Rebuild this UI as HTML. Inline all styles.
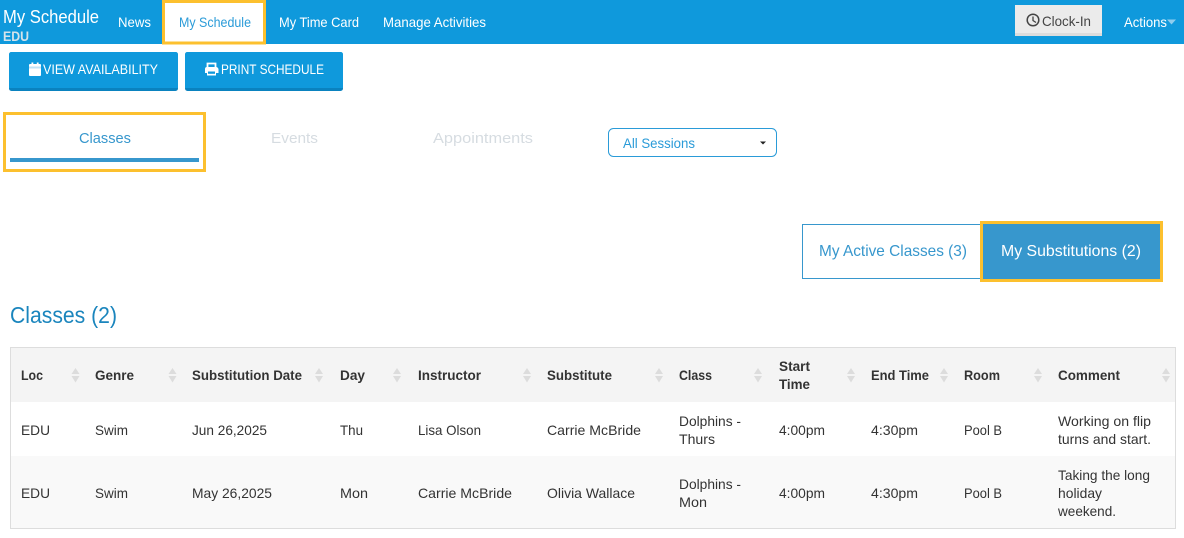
<!DOCTYPE html>
<html lang="en"><head><meta charset="utf-8"><title>My Schedule</title>
<style>
html,body{margin:0;padding:0;background:#fff;width:1184px;height:538px;overflow:hidden}
svg{display:block}
text{font-family:"Liberation Sans",sans-serif;font-size:14px;fill:#333;white-space:pre}
.n{fill:#fff}
.h{font-weight:bold;font-size:14px}
</style></head><body>
<svg width="1184" height="538" viewBox="0 0 1184 538" xmlns="http://www.w3.org/2000/svg">
<rect x="0" y="0" width="1184" height="44" fill="#0f99dc"/>
<text class="n" x="3" y="23" style="font-size:18px" textLength="96" lengthAdjust="spacingAndGlyphs">My Schedule</text>
<text x="3" y="41" style="font-size:14px;font-weight:bold;fill:#d5e3ea" textLength="26" lengthAdjust="spacingAndGlyphs">EDU</text>
<text class="n" x="118" y="27" textLength="33" lengthAdjust="spacingAndGlyphs">News</text>
<rect x="163.500" y="1.500" width="101" height="41.500" fill="#fff" stroke="#fcc02e" stroke-width="3"/>
<text x="179" y="27" style="fill:#2a9bd8" textLength="72" lengthAdjust="spacingAndGlyphs">My Schedule</text>
<text class="n" x="279" y="27" textLength="80" lengthAdjust="spacingAndGlyphs">My Time Card</text>
<text class="n" x="383" y="27" textLength="103" lengthAdjust="spacingAndGlyphs">Manage Activities</text>

<rect x="1015" y="5" width="87" height="31" fill="#ebebeb"/>
<rect x="1015" y="33" width="87" height="3" fill="#dcdcdc"/>
<circle cx="1033" cy="20" r="5.800" fill="none" stroke="#444" stroke-width="1.500"/>
<path d="M1033 16.500V20.500L1036 22.500" fill="none" stroke="#444" stroke-width="1.300"/>
<text x="1042" y="26" style="fill:#444" textLength="49" lengthAdjust="spacingAndGlyphs">Clock-In</text>
<text class="n" x="1124" y="27" textLength="43" lengthAdjust="spacingAndGlyphs">Actions</text>
<path d="M1167 19.500H1176L1171.500 24.500Z" fill="#8fcdee"/>

<rect x="9" y="52" width="169" height="39" rx="2.500" fill="#0a82bf"/>
<path d="M9 54.500a2.500 2.500 0 0 1 2.500-2.500h164a2.500 2.500 0 0 1 2.500 2.500V88H9Z" fill="#0f99dc"/>
<rect x="29" y="64" width="12" height="12" rx="1" fill="#fff"/>
<rect x="29" y="66.500" width="12" height="2" fill="#bfe3f7"/>
<rect x="31.500" y="62.500" width="1.800" height="3" fill="#fff"/><rect x="36.800" y="62.500" width="1.800" height="3" fill="#fff"/>
<text class="n" x="43" y="74" textLength="115" lengthAdjust="spacingAndGlyphs">VIEW AVAILABILITY</text>

<rect x="185" y="52" width="158" height="39" rx="2.500" fill="#0a82bf"/>
<path d="M185 54.500a2.500 2.500 0 0 1 2.500-2.500h153a2.500 2.500 0 0 1 2.500 2.500V88H185Z" fill="#0f99dc"/>
<path d="M207.500 67.500V63.500H215.500V67.500" fill="none" stroke="#fff" stroke-width="1.800"/>
<path d="M207 67H216a2.500 2.500 0 0 1 2.500 2.500V73H216V75.500H207V73H205V69a2 2 0 0 1 2-2Z" fill="#fff"/>
<rect x="208" y="71.500" width="7" height="2.300" fill="#0f99dc"/>
<text class="n" x="221" y="74" textLength="103" lengthAdjust="spacingAndGlyphs">PRINT SCHEDULE</text>

<rect x="4.500" y="113.500" width="200" height="57" fill="none" stroke="#fcc02e" stroke-width="3"/>
<text x="79" y="143" style="font-size:15px;fill:#3797cd" textLength="52" lengthAdjust="spacingAndGlyphs">Classes</text>
<rect x="10" y="158" width="189" height="4" fill="#3797cd"/>
<text x="271" y="143" style="font-size:15px;fill:#d6dce1" textLength="47" lengthAdjust="spacingAndGlyphs">Events</text>
<text x="433" y="143" style="font-size:15px;fill:#d6dce1" textLength="100" lengthAdjust="spacingAndGlyphs">Appointments</text>

<rect x="608.500" y="128.500" width="168" height="28" rx="5" fill="#fff" stroke="#2a9bd8"/>
<text x="623" y="148" style="fill:#2a9bd8" textLength="72" lengthAdjust="spacingAndGlyphs">All Sessions</text>
<path d="M760 141.500H766L763 144.500Z" fill="#222"/>

<rect x="802.500" y="224.500" width="180" height="54" fill="#fff" stroke="#3797cd"/>
<text x="819" y="256" style="font-size:16px;fill:#3797cd" textLength="148" lengthAdjust="spacingAndGlyphs">My Active Classes (3)</text>
<rect x="981.500" y="222.500" width="180" height="58" fill="#3797cd" stroke="#fcc02e" stroke-width="3"/>
<text class="n" x="1001" y="256" style="font-size:16px" textLength="140" lengthAdjust="spacingAndGlyphs">My Substitutions (2)</text>

<text x="10" y="323" style="font-size:23px;fill:#1a85bd" textLength="107" lengthAdjust="spacingAndGlyphs">Classes (2)</text>

<rect x="10.500" y="347.500" width="1165" height="181" fill="#fff" stroke="#ddd"/>
<rect x="11" y="348" width="1164" height="54" fill="#f4f4f4"/>
<rect x="11" y="456" width="1164" height="72" fill="#f9f9f9"/>

<g fill="#dcdcdc">
<path d="M71.500 374L75.500 368L79.500 374ZM71.500 376L75.500 382.500L79.500 376Z"/>
<path d="M168.500 374L172.500 368L176.500 374ZM168.500 376L172.500 382.500L176.500 376Z"/>
<path d="M315 374L319 368L323 374ZM315 376L319 382.500L323 376Z"/>
<path d="M393 374L397 368L401 374ZM393 376L397 382.500L401 376Z"/>
<path d="M523 374L527 368L531 374ZM523 376L527 382.500L531 376Z"/>
<path d="M655 374L659 368L663 374ZM655 376L659 382.500L663 376Z"/>
<path d="M754 374L758 368L762 374ZM754 376L758 382.500L762 376Z"/>
<path d="M847 374L851 368L855 374ZM847 376L851 382.500L855 376Z"/>
<path d="M940 374L944 368L948 374ZM940 376L944 382.500L948 376Z"/>
<path d="M1034 374L1038 368L1042 374ZM1034 376L1038 382.500L1042 376Z"/>
<path d="M1162 374L1166 368L1170 374ZM1162 376L1166 382.500L1170 376Z"/>
</g>

<g>
<text class="h" x="21" y="380" textLength="22" lengthAdjust="spacingAndGlyphs">Loc</text>
<text class="h" x="95" y="380" textLength="39" lengthAdjust="spacingAndGlyphs">Genre</text>
<text class="h" x="192" y="380" textLength="110" lengthAdjust="spacingAndGlyphs">Substitution Date</text>
<text class="h" x="340" y="380" textLength="25" lengthAdjust="spacingAndGlyphs">Day</text>
<text class="h" x="418" y="380" textLength="63" lengthAdjust="spacingAndGlyphs">Instructor</text>
<text class="h" x="547" y="380" textLength="65" lengthAdjust="spacingAndGlyphs">Substitute</text>
<text class="h" x="679" y="380" textLength="33" lengthAdjust="spacingAndGlyphs">Class</text>
<text class="h" x="779" y="371" textLength="31" lengthAdjust="spacingAndGlyphs">Start</text>
<text class="h" x="779" y="389" textLength="31" lengthAdjust="spacingAndGlyphs">Time</text>
<text class="h" x="871" y="380" textLength="58" lengthAdjust="spacingAndGlyphs">End Time</text>
<text class="h" x="964" y="380" textLength="36" lengthAdjust="spacingAndGlyphs">Room</text>
<text class="h" x="1058" y="380" textLength="62" lengthAdjust="spacingAndGlyphs">Comment</text>
</g>

<g>
<text x="21" y="435" textLength="29" lengthAdjust="spacingAndGlyphs">EDU</text>
<text x="95" y="435" textLength="33" lengthAdjust="spacingAndGlyphs">Swim</text>
<text x="192" y="435" textLength="75" lengthAdjust="spacingAndGlyphs">Jun 26,2025</text>
<text x="340" y="435" textLength="23" lengthAdjust="spacingAndGlyphs">Thu</text>
<text x="418" y="435" textLength="63" lengthAdjust="spacingAndGlyphs">Lisa Olson</text>
<text x="547" y="435" textLength="94" lengthAdjust="spacingAndGlyphs">Carrie McBride</text>
<text x="679" y="426" textLength="62" lengthAdjust="spacingAndGlyphs">Dolphins -</text>
<text x="679" y="444" textLength="36" lengthAdjust="spacingAndGlyphs">Thurs</text>
<text x="779" y="435" textLength="46" lengthAdjust="spacingAndGlyphs">4:00pm</text>
<text x="871" y="435" textLength="47" lengthAdjust="spacingAndGlyphs">4:30pm</text>
<text x="964" y="435" textLength="38" lengthAdjust="spacingAndGlyphs">Pool B</text>
<text x="1058" y="426" textLength="93" lengthAdjust="spacingAndGlyphs">Working on flip</text>
<text x="1058" y="444" textLength="93" lengthAdjust="spacingAndGlyphs">turns and start.</text>
</g>

<g>
<text x="21" y="498" textLength="29" lengthAdjust="spacingAndGlyphs">EDU</text>
<text x="95" y="498" textLength="33" lengthAdjust="spacingAndGlyphs">Swim</text>
<text x="192" y="498" textLength="80" lengthAdjust="spacingAndGlyphs">May 26,2025</text>
<text x="340" y="498" textLength="28" lengthAdjust="spacingAndGlyphs">Mon</text>
<text x="418" y="498" textLength="94" lengthAdjust="spacingAndGlyphs">Carrie McBride</text>
<text x="547" y="498" textLength="88" lengthAdjust="spacingAndGlyphs">Olivia Wallace</text>
<text x="679" y="489" textLength="62" lengthAdjust="spacingAndGlyphs">Dolphins -</text>
<text x="679" y="507" textLength="28" lengthAdjust="spacingAndGlyphs">Mon</text>
<text x="779" y="498" textLength="46" lengthAdjust="spacingAndGlyphs">4:00pm</text>
<text x="871" y="498" textLength="47" lengthAdjust="spacingAndGlyphs">4:30pm</text>
<text x="964" y="498" textLength="38" lengthAdjust="spacingAndGlyphs">Pool B</text>
<text x="1058" y="480" textLength="92" lengthAdjust="spacingAndGlyphs">Taking the long</text>
<text x="1058" y="498" textLength="44" lengthAdjust="spacingAndGlyphs">holiday</text>
<text x="1058" y="516" textLength="58" lengthAdjust="spacingAndGlyphs">weekend.</text>
</g>
</svg>
</body></html>
